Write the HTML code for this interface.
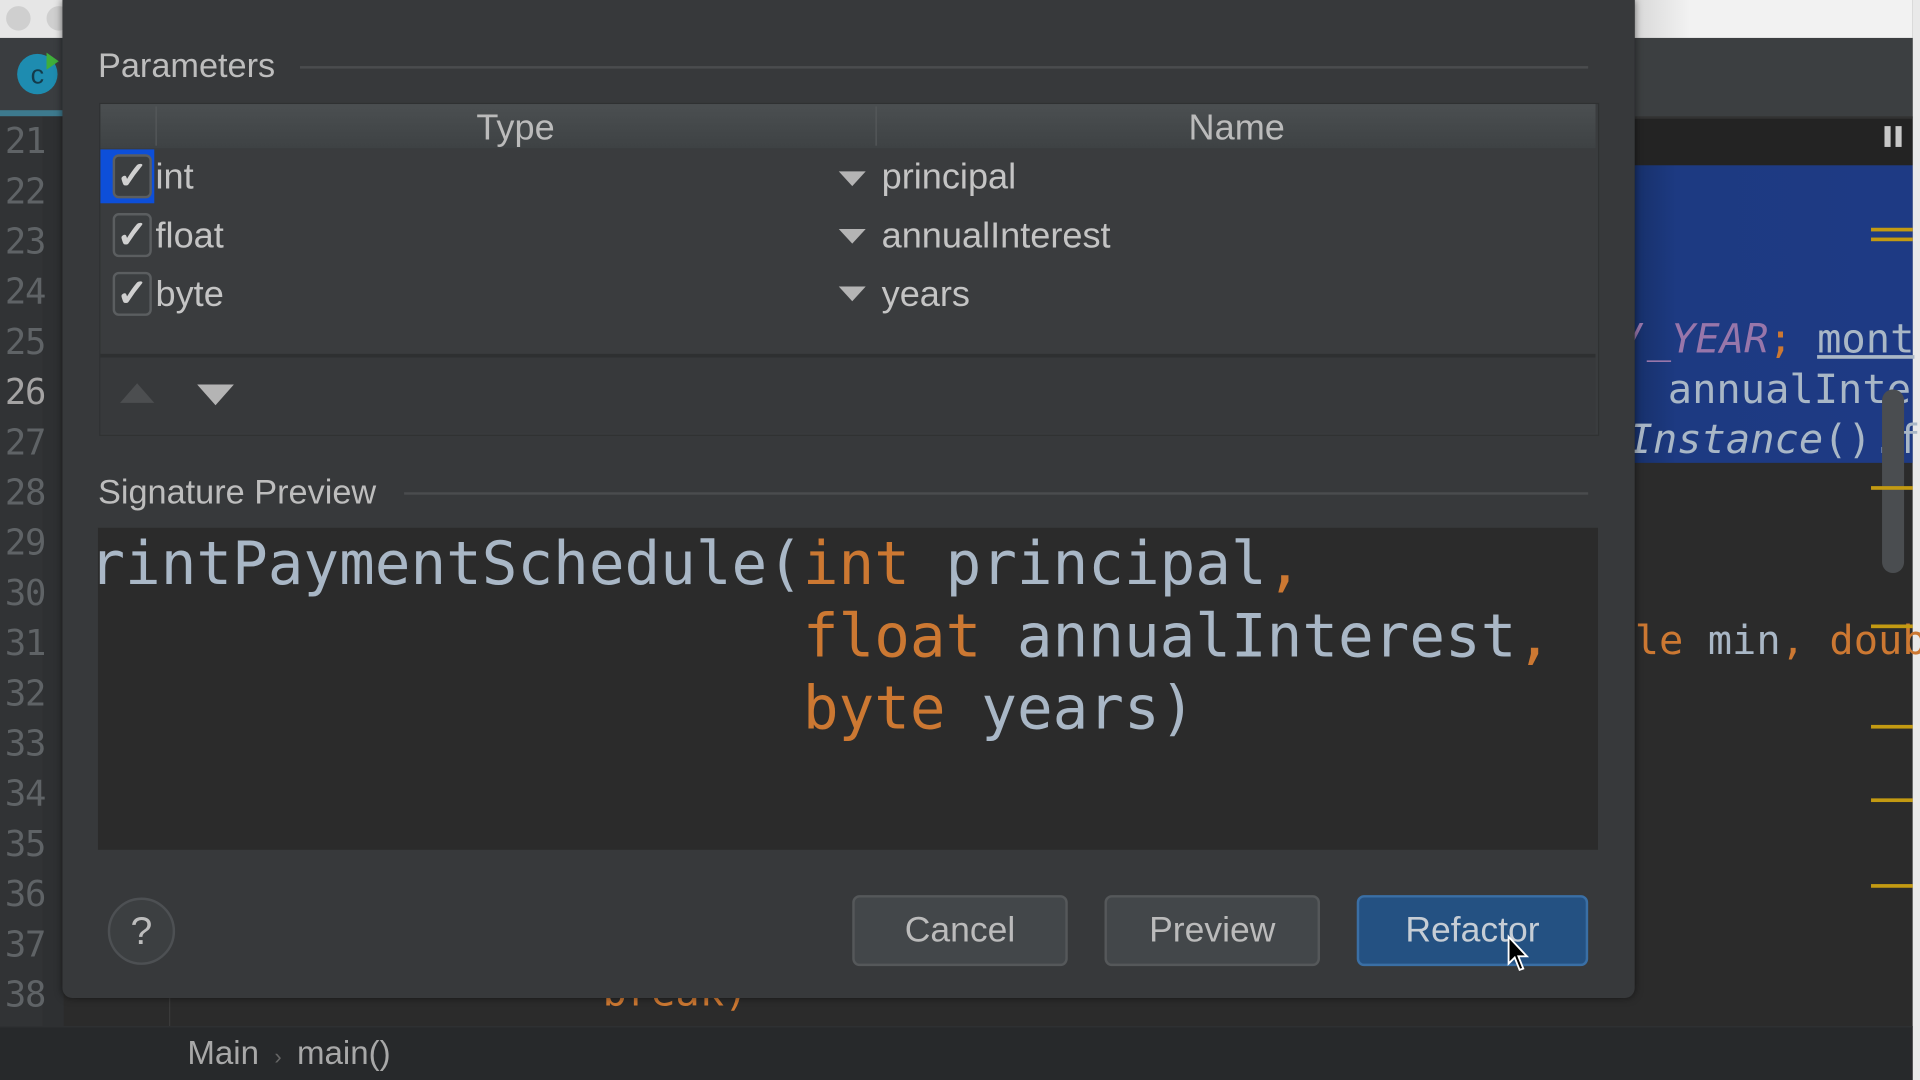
<!DOCTYPE html>
<html><head><meta charset="utf-8"><style>
html,body{margin:0;padding:0;width:1920px;height:1080px;overflow:hidden;background:#2b2b2b}
#s{position:absolute;left:0;top:0;width:1568px;height:882px;transform:scale(1.22449);transform-origin:0 0;font-family:"Liberation Sans",sans-serif;overflow:hidden;background:#2b2b2b}
.a{position:absolute}
.ln{position:absolute;left:4px;width:42px;font-family:"DejaVu Sans Mono",monospace;font-size:29px;color:#5f6366;letter-spacing:-1px}
.t{color:#bbbbbb;font-size:29.5px;position:absolute}
.mono{font-family:"DejaVu Sans Mono",monospace;font-size:47.5px;position:absolute;white-space:pre;color:#a9b7c6}
.o{color:#cc7832}
.cb{position:absolute;left:92px;width:28px;height:32px;border:2px solid #5b5e60;border-radius:5px;background:#3b3e40;color:#d0d0d0;font-size:31px;line-height:32px;text-align:center;font-weight:bold}
.tri{position:absolute;width:0;height:0;border-left:11px solid transparent;border-right:11px solid transparent;border-top:12px solid #b4b4b4}
.btn{position:absolute;top:731px;height:54px;border:2px solid #55585a;border-radius:6px;background:#43474a;color:#bbbbbb;font-size:29px;text-align:center;line-height:54px}
.mk{position:absolute;left:1528px;width:34px;height:3px;background:#c39a12}
</style></head><body><div id="s">
<div class="a" style="left:0;top:0;width:52px;height:31px;background:#e6e6e6"></div>
<div class="a" style="left:5px;top:5px;width:20px;height:20px;border-radius:50%;background:#cfcfcf"></div>
<div class="a" style="left:38px;top:5px;width:20px;height:20px;border-radius:50%;background:#cfcfcf"></div>
<div class="a" style="left:1335px;top:0;width:227px;height:31px;background:linear-gradient(90deg,#d8d8d8,#f2f2f2 20%)"></div>
<div class="a" style="left:1562px;top:0;width:6px;height:882px;background:#e9e9e9"></div>
<div class="a" style="left:0;top:31px;width:52px;height:64px;background:#3a3d40"></div>
<div class="a" style="left:14px;top:44px;width:33px;height:33px;border-radius:50%;background:#1e8cb0;color:#143b4a;font-size:22px;line-height:33px;text-align:center">c</div>
<div class="a" style="left:38px;top:43px;width:0;height:0;border-top:7px solid transparent;border-bottom:7px solid transparent;border-left:10px solid #3fae3b"></div>
<div class="a" style="left:0;top:90px;width:52px;height:5px;background:#3d7a8e"></div>
<div class="a" style="left:1335px;top:31px;width:227px;height:64px;background:#3c3f41;border-bottom:2px solid #323232"></div>
<div class="a" style="left:0;top:95px;width:35px;height:743px;background:#313335"></div>
<div class="a" style="left:35px;top:95px;width:17px;height:743px;background:#2e3032"></div>
<div class="ln" style="top:98px">21</div><div class="ln" style="top:139px">22</div><div class="ln" style="top:180px">23</div><div class="ln" style="top:221px">24</div><div class="ln" style="top:262px">25</div><div class="ln" style="top:303px;color:#a4a3a3">26</div><div class="ln" style="top:344px">27</div><div class="ln" style="top:385px">28</div><div class="ln" style="top:426px">29</div><div class="ln" style="top:467px">30</div><div class="ln" style="top:508px">31</div><div class="ln" style="top:549px">32</div><div class="ln" style="top:590px">33</div><div class="ln" style="top:631px">34</div><div class="ln" style="top:672px">35</div><div class="ln" style="top:713px">36</div><div class="ln" style="top:754px">37</div><div class="ln" style="top:795px">38</div>
<div class="a" style="left:1335px;top:97px;width:227px;height:38px;background:#232323"></div>
<div class="a" style="left:1539px;top:103px;width:5px;height:17px;background:#c8c8c8"></div>
<div class="a" style="left:1548px;top:103px;width:5px;height:17px;background:#c8c8c8"></div>
<div class="a" style="left:1335px;top:135px;width:227px;height:243px;background:linear-gradient(90deg,#17306a,#1d3a82 15%,#1e3a84)"></div>
<div class="mono" style="left:1325px;top:257px;font-size:33px;font-style:italic;color:#9876aa">/_YEAR<span class="o" style="font-style:normal">;</span> <span style="color:#a9b7c6;font-style:normal;text-decoration:underline">mont</span></div>
<div class="mono" style="left:1362px;top:298px;font-size:33px">annualInte</div>
<div class="mono" style="left:1330px;top:339px;font-size:33px;font-style:italic">Instance<span style="font-style:normal">().f</span></div>
<div class="mono" style="left:1335px;top:503px;font-size:33px"><span class="o">le</span> min<span class="o">,</span> <span class="o">doub</span></div>
<div class="a" style="left:1537px;top:318px;width:18px;height:150px;border-radius:9px;background:#4a4d50"></div>
<div class="mk" style="top:186px"></div><div class="mk" style="top:194px"></div><div class="mk" style="top:397px"></div><div class="mk" style="top:510px"></div><div class="mk" style="top:592px"></div><div class="mk" style="top:652px"></div><div class="mk" style="top:722px"></div>
<div class="a" style="left:138px;top:815px;width:1px;height:23px;background:#3a3a3a"></div>
<div class="mono" style="left:492px;top:790px;font-size:33px;color:#cc7832">break)</div>
<div class="a" style="left:0;top:838px;width:1562px;height:44px;background:#27292b;border-top:1px solid #303234"></div>
<div class="t" style="left:153px;top:845px;font-size:27px;color:#a8a8a8">Main <span style="color:#666;font-size:18px">&nbsp;›&nbsp;</span> main()</div>
<div class="a" style="left:51px;top:0;width:1284px;height:815px;background:#37393b;border-radius:0 0 8px 8px;box-shadow:0 0 6px rgba(0,0,0,.5)"></div>
<div class="t" style="left:80px;top:38px;font-size:28px;color:#bdbdbd">Parameters</div>
<div class="a" style="left:245px;top:54px;width:1052px;height:2px;background:#4a4c4e"></div>
<div class="a" style="left:81px;top:84px;width:1223px;height:270px;background:#3a3c3e;border:1px solid #2f3132"></div>
<div class="a" style="left:82px;top:85px;width:1221px;height:36px;background:linear-gradient(#4b4f51,#3e4244)"></div>
<div class="a" style="left:127px;top:87px;width:1px;height:32px;background:#56595b"></div>
<div class="a" style="left:715px;top:87px;width:1px;height:32px;background:#56595b"></div>
<div class="t" style="left:127px;width:588px;text-align:center;top:88px">Type</div>
<div class="t" style="left:715px;width:590px;text-align:center;top:88px">Name</div>
<div class="a" style="left:82px;top:122px;width:44px;height:44px;background:#0d4fd9"></div>
<div class="cb" style="top:126px">✓</div><div class="cb" style="top:174px">✓</div><div class="cb" style="top:222px">✓</div>
<div class="t" style="left:127px;top:128px;color:#c4c4c4">int</div>
<div class="t" style="left:127px;top:176px;color:#c4c4c4">float</div>
<div class="t" style="left:127px;top:224px;color:#c4c4c4">byte</div>
<div class="tri" style="left:685px;top:140px"></div><div class="tri" style="left:685px;top:187px"></div><div class="tri" style="left:685px;top:234px"></div>
<div class="t" style="left:720px;top:128px;color:#c4c4c4">principal</div>
<div class="t" style="left:720px;top:176px;color:#c4c4c4">annualInterest</div>
<div class="t" style="left:720px;top:224px;color:#c4c4c4">years</div>
<div class="a" style="left:82px;top:289px;width:1221px;height:3px;background:#2e3031"></div>
<div class="a" style="left:82px;top:292px;width:1221px;height:62px;background:#37393b"></div>
<div class="a" style="left:98px;top:313px;width:0;height:0;border-left:14px solid transparent;border-right:14px solid transparent;border-bottom:16px solid #4c4e50"></div>
<div class="a" style="left:161px;top:314px;width:0;height:0;border-left:15px solid transparent;border-right:15px solid transparent;border-top:17px solid #b4b4b4"></div>
<div class="t" style="left:80px;top:386px;font-size:28px;color:#bdbdbd">Signature Preview</div>
<div class="a" style="left:330px;top:402px;width:967px;height:2px;background:#4a4c4e"></div>
<div class="a" style="left:80px;top:431px;width:1225px;height:263px;background:#2b2b2b;overflow:hidden">
<div class="mono" style="left:-7px;top:1px;line-height:59px;font-size:48.4px">rintPaymentSchedule(<span class="o">int</span> principal<span class="o">,</span>
                    <span class="o">float</span> annualInterest<span class="o">,</span>
                    <span class="o">byte</span> years)</div>
</div>
<div class="a" style="left:88px;top:733px;width:51px;height:51px;border:2px solid #4d5053;border-radius:50%;background:#3c3f41;color:#bdbdbd;font-size:32px;text-align:center;line-height:51px">?</div>
<div class="btn" style="left:696px;width:172px">Cancel</div>
<div class="btn" style="left:902px;width:172px">Preview</div>
<div class="btn" style="left:1108px;width:185px;background:#245182;border-color:#3a6fa5;color:#c6cdd5">Refactor</div>
<svg class="a" style="left:1230px;top:763px" width="22" height="32" viewBox="0 0 22 32"><path d="M2 2 L2 24 L7 19 L11 29 L14 28 L10 18 L17 18 Z" fill="#000" stroke="#fff" stroke-width="1.5"/></svg>
</div></body></html>
